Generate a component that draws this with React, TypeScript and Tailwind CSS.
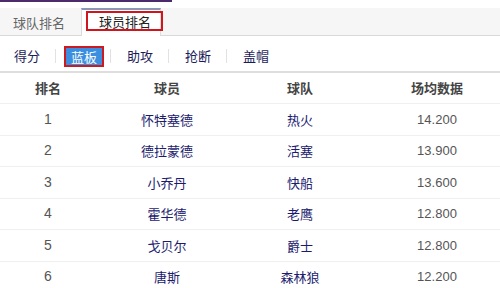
const rows = [
  { rank: 1, player: "怀特塞德", team: "热火", stat: "14.200" },
  { rank: 2, player: "德拉蒙德", team: "活塞", stat: "13.900" },
  { rank: 3, player: "小乔丹", team: "快船", stat: "13.600" },
  { rank: 4, player: "霍华德", team: "老鹰", stat: "12.800" },
  { rank: 5, player: "戈贝尔", team: "爵士", stat: "12.800" },
  { rank: 6, player: "唐斯", team: "森林狼", stat: "12.200" },
];

const cats = ["得分", "蓝板", "助攻", "抢断", "盖帽"];

const font = "font-['Noto_Sans_CJK_SC','Noto_Sans',sans-serif]";

export default function App() {
  return (
    <div className={`w-[500px] h-[288px] overflow-hidden bg-white ${font}`}>
      {/* top strip */}
      <div className="h-[8px]">
        <div className="w-[172px] h-[2px] bg-[#4b2a6e]" />
      </div>

      {/* tabs */}
      <div className="h-[28px] flex items-end bg-[#f6f6f6] border-b border-[#d9d9d9] pl-[2px]">
        <div className="w-[74px] h-[27px] flex items-center justify-center pt-[2px] text-[13px] text-[#666]">球队排名</div>
        <div className="ml-[5px] w-[80px] h-[28px] -mb-px bg-white border-t-2 border-[#8a98b8] border-x border-x-[#dcdcdc] relative flex items-center justify-center text-[13px] text-[#222]">
          <span className="absolute left-[4px] top-[1px] w-[77px] h-[20px] border-2 border-[#d0161c]" />
          <span className="relative -mt-[2px] ml-[8px]">球员排名</span>
        </div>
      </div>

      {/* categories */}
      <div className="h-[37px] flex items-center pt-[5px] pl-[14px] border-b-2 border-[#dedede] text-[13px] text-[#1c1c5a]">
        {cats.map((c, i) => (
          <div key={c} className="flex items-center">
            {i > 0 && <span className={`w-px h-[14px] bg-[#e2e2e2] ${i === 2 ? "ml-[6px]" : "ml-[15px]"}`} />}
            {i === 1 ? (
              <span className="ml-[8px] px-[5px] leading-[17px] bg-[#3a8fe0] text-white border-2 border-[#cc1a1f]">{c}</span>
            ) : (
              <span className={i === 0 ? "" : "ml-[16px]"}>{c}</span>
            )}
          </div>
        ))}
      </div>

      {/* table */}
      <div className="text-[13px]">
        <div className="grid grid-cols-[96px_142px_124px_138px] h-[31px] items-center font-bold text-[#444] border-b border-[#efefef]">
          <div className="text-center">排名</div>
          <div className="text-center">球员</div>
          <div className="text-center">球队</div>
          <div className="text-center pl-[12px]">场均数据</div>
        </div>
        {rows.map((r) => (
          <div key={r.rank} className="grid grid-cols-[96px_142px_124px_138px] h-[31.5px] items-center border-b border-[#efefef]">
            <div className="text-center text-[#555] text-[14px] font-['Liberation_Sans',sans-serif]">{r.rank}</div>
            <div className="text-center text-[#1c1c6e]">{r.player}</div>
            <div className="text-center text-[#1c1c6e]">{r.team}</div>
            <div className="text-center pl-[12px] text-[#555] text-[13px] font-['Liberation_Sans',sans-serif]">{r.stat}</div>
          </div>
        ))}
      </div>
    </div>
  );
}
